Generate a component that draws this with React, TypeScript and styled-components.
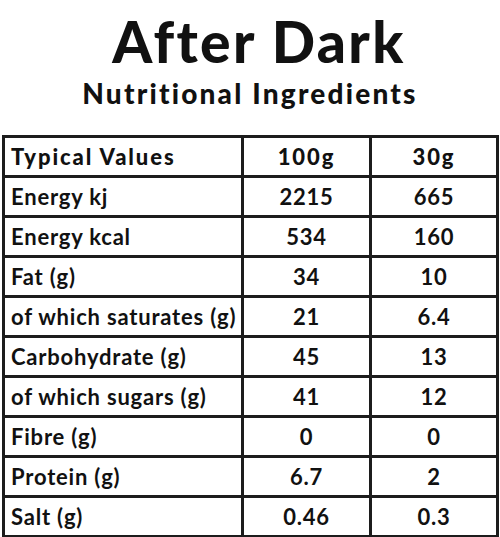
import styled, { createGlobalStyle } from 'styled-components';

const GlobalStyle = createGlobalStyle`
  body {
    margin: 0;
    background: #fff;
    font-family: Lato, "Liberation Sans", sans-serif;
    color: #111;
  }
`

const rows = [
    ['Energy kj', '2215', '665'],
    ['Energy kcal', '534', '160'],
    ['Fat (g)', '34', '10'],
    ['of which saturates (g)', '21', '6.4'],
    ['Carbohydrate (g)', '45', '13'],
    ['of which sugars (g)', '41', '12'],
    ['Fibre (g)', '0', '0'],
    ['Protein (g)', '6.7', '2'],
    ['Salt (g)', '0.46', '0.3'],
]

function App() {
    return (
        <Page>
            <GlobalStyle/>
            <Header>
                <Title>After Dark</Title>
                <Subtitle>Nutritional Ingredients</Subtitle>
            </Header>
            <Table>
                <colgroup>
                    <col style={{width: 239}}/>
                    <col style={{width: 128}}/>
                    <col style={{width: 127}}/>
                </colgroup>
                <thead>
                <tr>
                    <Cell as="th" $head>Typical Values</Cell>
                    <Cell as="th" $head $num>100g</Cell>
                    <Cell as="th" $head $num>30g</Cell>
                </tr>
                </thead>
                <tbody>
                {rows.map(([name, a, b]) => (
                    <tr key={name}>
                        <Cell>{name}</Cell>
                        <Cell $num>{a}</Cell>
                        <Cell $num>{b}</Cell>
                    </tr>
                ))}
                </tbody>
            </Table>
        </Page>
    )
}

export default App


const Page = styled.div`
    width: 500px;
    height: 537px;
    overflow: hidden;
`

const Header = styled.div`
    display: flex;
    flex-direction: column;
    align-items: center;
    padding-top: 8px;
    height: 127px;
    box-sizing: border-box;
`

const Title = styled.h1`
    margin: 0 0 0 18px;
    font-size: 57px;
    font-weight: 900;
    line-height: 66px;
    letter-spacing: 2.4px;
`

const Subtitle = styled.h2`
    margin: 2px 0 0;
    font-size: 28px;
    font-weight: 900;
    line-height: 34px;
    letter-spacing: 2.2px;
`

const Table = styled.table`
    margin: 8px 0 0 2px;
    width: 497px;
    table-layout: fixed;
    border-spacing: 0;
    border-top: 3px solid #1c1c1c;
    border-left: 3px solid #1c1c1c;
`

const Cell = styled.td<{ $head?: boolean; $num?: boolean }>`
    height: 37px;
    padding: 0 0 0 ${p => p.$num ? 0 : 6}px;
    border-right: 3px solid #1c1c1c;
    border-bottom: 3px solid #1c1c1c;
    font-size: 22px;
    font-weight: ${p => p.$head ? 900 : 700};
    letter-spacing: ${p => p.$head ? 1.9 : 0.8}px;
    text-align: ${p => p.$num ? 'center' : 'left'};
    white-space: nowrap;
    vertical-align: middle;
`
